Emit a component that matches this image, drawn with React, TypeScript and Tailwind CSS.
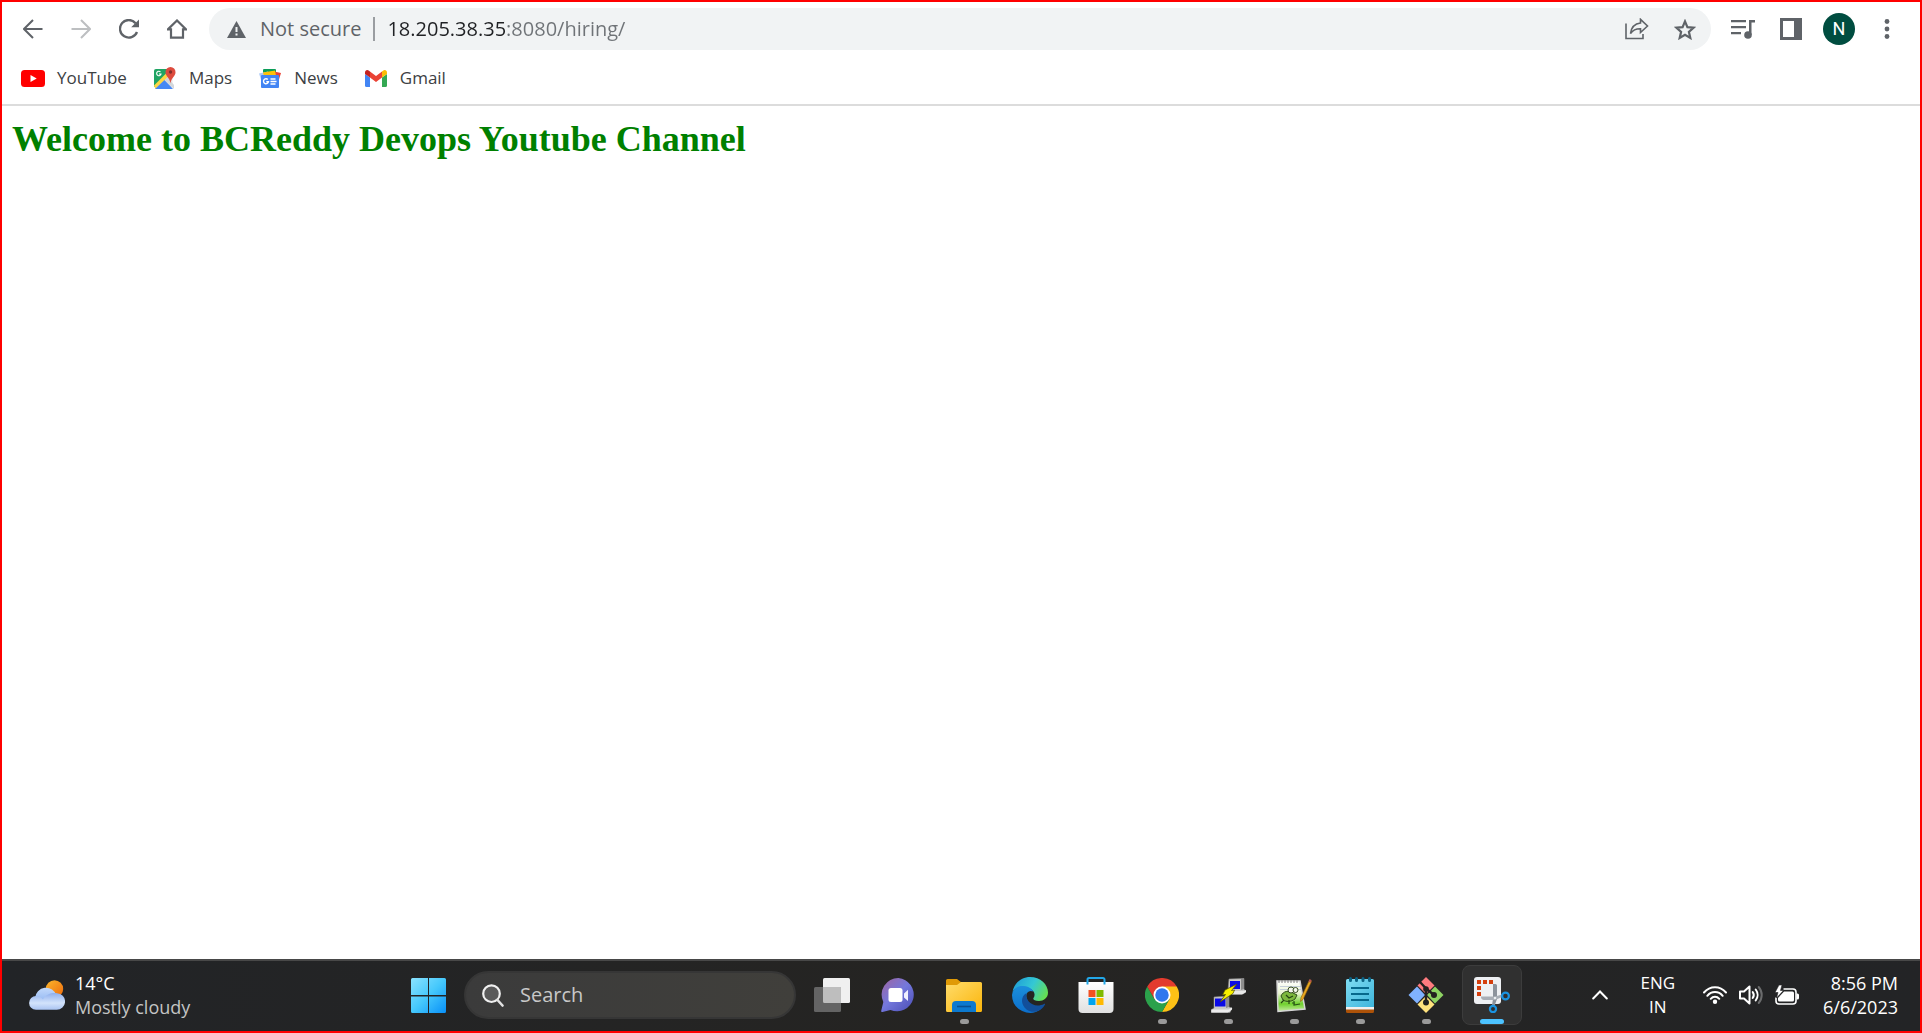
import type { ReactNode } from "react";

function IconButton({ label, children }: { label: string; children: ReactNode }) {
  return (
    <button type="button" aria-label={label} className="flex size-8 shrink-0 items-center justify-center text-[#5f6368]">
      {children}
    </button>
  );
}

/* ---------- Browser icons ---------- */

function ArrowIcon({ forward = false }: { forward?: boolean }) {
  return (
    <svg width="20" height="20" viewBox="0 0 20 20" fill="none" stroke={forward ? "#bdbfc1" : "#5f6368"} strokeWidth="2">
      {forward ? <path d="M0.5 10H18.5M10 1l9 9-9 9" /> : <path d="M19.5 10H1.5M10 1l-9 9 9 9" />}
    </svg>
  );
}

function ReloadIcon() {
  return (
    <svg width="20" height="20" viewBox="0 0 20 20">
      <path d="M18 13A8.8 8.8 0 1 1 16.6 4.2" fill="none" stroke="#5f6368" strokeWidth="2.3" />
      <path d="M20 0.5V8.3H12.2Z" fill="#5f6368" />
    </svg>
  );
}

function HomeIcon() {
  return (
    <svg width="20" height="20" viewBox="0 0 20 20" fill="none" stroke="#5f6368" strokeWidth="2.2">
      <path d="M0.9 10.4 10 1.5l9.1 8.9H16V18.7H4V10.4Z" strokeLinejoin="miter" />
    </svg>
  );
}

function WarningIcon() {
  return (
    <svg width="19" height="17" viewBox="0 0 19 17" className="shrink-0">
      <path d="M9.5 0 19 17H0Z" fill="#5f6368" />
      <path d="M8.5 6h2v5h-2zM8.5 12.5h2v2h-2z" fill="#f1f3f4" />
    </svg>
  );
}

function ShareIcon() {
  return (
    <svg width="24" height="22" viewBox="0 0 24 22" fill="none" stroke="#5f6368" strokeWidth="1.6">
      <path d="M1 5.5V20.5H18V16" />
      <path d="M15.5 1.3 22.5 8l-7 6.5V10.8C11 10.7 8 12 5.5 15.5 6.2 10 9.2 5.7 15.5 5Z" />
    </svg>
  );
}

function StarIcon() {
  return (
    <svg width="22" height="21" viewBox="0 0 22 21" fill="none" stroke="#5f6368" strokeWidth="2.2">
      <path d="m11 2.4 2.4 5.8 6.2.5-4.7 4.1 1.4 6.1L11 15.7l-5.3 3.2 1.4-6.1L2.4 8.7l6.2-.5Z" />
    </svg>
  );
}

function QueueIcon() {
  return (
    <svg width="24" height="19" viewBox="0 0 24 19">
      <path d="M0 1.2h15M0 7.2h15M0 13.2h10" stroke="#5f6368" strokeWidth="2.2" />
      <path d="M18 0h6v2.5h-3.500V15H18Z" fill="#5f6368" />
      <circle cx="17" cy="15" r="3.8" fill="#5f6368" />
    </svg>
  );
}

function SidePanelIcon() {
  return (
    <svg width="22" height="22" viewBox="0 0 22 22">
      <path d="M0 0h22v22H0ZM3 3v16h11V3Z" fill="#5f6368" fillRule="evenodd" />
    </svg>
  );
}

function MenuDotsIcon() {
  return (
    <svg width="6" height="20" viewBox="0 0 6 20" fill="#5f6368">
      <circle cx="3" cy="2.5" r="2.4" />
      <circle cx="3" cy="10" r="2.4" />
      <circle cx="3" cy="17.5" r="2.4" />
    </svg>
  );
}

function YouTubeIcon() {
  return (
    <svg width="24" height="17" viewBox="0 0 24 17">
      <rect width="24" height="17" rx="3.5" fill="#f00" />
      <path d="M9.5 5v7l6.2-3.5Z" fill="#fff" />
    </svg>
  );
}

function MapsIcon() {
  return (
    <svg width="24" height="24" viewBox="0 0 24 24">
      <path d="M3 3H19.5V21.5H3a2 2 0 0 1-2-2V5a2 2 0 0 1 2-2Z" fill="#e8eaed" />
      <path d="M3 3H16v6L1 21V5a2 2 0 0 1 2-2Z" fill="#1fa463" />
      <path d="m1 19.5 12-12 3 3L2.5 23Z" fill="#fdd744" />
      <path d="M2 23 11.500 14 20 23Z" fill="#4688f4" />
      <path d="m11.5 14 3-3L21 19v4Z" fill="#d4d7da" />
      <path d="M17.5 1a5 5 0 0 1 5 5.2c0 4-4 5-5 11-1-6-5-7-5-11a5 5 0 0 1 5-5.2Z" fill="#dd4b3e" />
      <circle cx="17.5" cy="6" r="1.7" fill="#822f2b" />
      <path d="M7.500 6A2.2 2.2 0 1 0 8 8H6" fill="none" stroke="#fff" strokeWidth="1.1" />
    </svg>
  );
}

function NewsIcon() {
  return (
    <svg width="24" height="20" viewBox="0 0 24 20">
      <rect x="5" y="1" width="13" height="12" rx="1" fill="#0c9d58" />
      <path d="m1 5.5 9-2 3 11-8 3Z" fill="#a9c9f8" />
      <path d="m23 5-9-2-3 11 8 4Z" fill="#ea4335" />
      <path d="m5 4.5 12-2 2 10H7Z" fill="#ffc107" />
      <rect x="3" y="7" width="18" height="13" rx="1" fill="#4285f4" />
      <path d="M9.800 11.500A2.5 2.5 0 1 0 10.500 13.700H8.300" fill="none" stroke="#fff" strokeWidth="1.4" />
      <path d="M12.500 11h5M12.500 13.500h6M12.500 16h5" stroke="#fff" strokeWidth="1.3" />
    </svg>
  );
}

function GmailIcon() {
  return (
    <svg width="22" height="17" viewBox="0 0 22 17">
      <path d="M0 4 5 7.500V17H1.500A1.500 1.500 0 0 1 0 15.500Z" fill="#4285f4" />
      <path d="M22 4 17 7.500V17h3.500a1.500 1.500 0 0 0 1.500-1.500Z" fill="#34a853" />
      <path d="M5 1.500 11 6l6-4.500v6L11 12 5 7.500Z" fill="#ea4335" />
      <path d="M0 2.500C0 .2 2.300-.6 4 .7l1 .8v6L0 4Z" fill="#c5221f" />
      <path d="M22 2.500C22 .2 19.700-.6 18 .7l-1 .8v6L22 4Z" fill="#fbbc04" />
    </svg>
  );
}

/* ---------- Taskbar icons ---------- */

function WeatherIcon() {
  return (
    <svg width="36" height="30" viewBox="0 0 36 30" className="shrink-0">
      <defs>
        <linearGradient id="sun" x1="0" y1="0" x2="1" y2="1">
          <stop offset="0" stopColor="#fbb62c" />
          <stop offset="1" stopColor="#ee6a0c" />
        </linearGradient>
        <linearGradient id="cloudBack" x1="0" y1="0" x2="0" y2="1">
          <stop offset="0" stopColor="#c2d9fb" />
          <stop offset="1" stopColor="#86aef0" />
        </linearGradient>
        <linearGradient id="cloudFront" x1="0" y1="0" x2="0" y2="1">
          <stop offset="0" stopColor="#8fb0ee" />
          <stop offset="0.6" stopColor="#d3e3fb" />
          <stop offset="1" stopColor="#a9c3f2" />
        </linearGradient>
      </defs>
      <circle cx="25.5" cy="9" r="8.7" fill="url(#sun)" />
      <path d="M6 18a11 11 0 0 1 21.500-2.500L26 26H8Z" fill="url(#cloudBack)" />
      <path d="M7 16c3 0 5 1 7 3.500C17 14 23 12.500 28 13.200a8.300 8.300 0 0 1-.5 16.600H7A6.900 6.900 0 0 1 7 16Z" fill="url(#cloudFront)" />
    </svg>
  );
}

function StartIcon() {
  return (
    <svg width="35" height="35" viewBox="0 0 35 35">
      <defs>
        <linearGradient id="start" x1="0" y1="0" x2="35" y2="35" gradientUnits="userSpaceOnUse">
          <stop offset="0" stopColor="#8be3ff" />
          <stop offset="0.5" stopColor="#45c8fc" />
          <stop offset="1" stopColor="#0890f8" />
        </linearGradient>
      </defs>
      <path d="M1.500 0H17V17H0V1.500A1.500 1.500 0 0 1 1.500 0ZM18 0h15.500A1.500 1.500 0 0 1 35 1.500V17H18ZM0 18.500h17V35H1.500A1.500 1.500 0 0 1 0 33.500ZM18 18.500h17v15a1.500 1.500 0 0 1-1.500 1.500H18Z" fill="url(#start)" />
    </svg>
  );
}

function SearchIcon() {
  return (
    <svg width="22" height="23" viewBox="0 0 22 23" className="shrink-0">
      <circle cx="9.5" cy="9.7" r="8.3" fill="#5a5a5a" stroke="#f0f0f0" strokeWidth="2.2" />
      <path d="m15.500 16 5 5.500" stroke="#e2e2e2" strokeWidth="2.6" strokeLinecap="round" />
    </svg>
  );
}

function TaskViewIcon() {
  return (
    <svg width="36" height="34" viewBox="0 0 36 34">
      <rect x="9" width="27" height="25" rx="1.5" fill="#f0f0f0" />
      <rect y="9" width="27" height="25" rx="1.5" fill="#646464" />
      <path d="M9 9h18v16H10.500A1.500 1.500 0 0 1 9 23.500Z" fill="#bebebe" />
    </svg>
  );
}

function ChatIcon() {
  return (
    <svg width="34" height="34" viewBox="0 0 34 34">
      <defs>
        <linearGradient id="chat" x1="0" y1="0" x2="0.9" y2="1">
          <stop offset="0" stopColor="#a0649f" />
          <stop offset="0.5" stopColor="#7478dc" />
          <stop offset="1" stopColor="#4d50b8" />
        </linearGradient>
      </defs>
      <path d="M17.500 0A16.700 16.700 0 1 1 9.500 32L1.500 34C.3 34.200 0 33.500.3 32.500L2.300 24A16.700 16.700 0 0 1 17.500 0Z" fill="url(#chat)" />
      <rect x="7.500" y="10" width="14" height="14" rx="2.500" fill="#fff" />
      <path d="M23 15.500 27 11.800V23L23 19.500Z" fill="#f1f1ff" />
    </svg>
  );
}

function FolderIcon() {
  return (
    <svg width="36" height="33" viewBox="0 0 36 33">
      <defs>
        <linearGradient id="folder" x1="0" y1="0" x2="1" y2="1">
          <stop offset="0" stopColor="#ffdc6b" />
          <stop offset="1" stopColor="#fbb50b" />
        </linearGradient>
      </defs>
      <path d="M1.500 0H11l4.500 3.500V8H0V1.500A1.500 1.500 0 0 1 1.500 0Z" fill="#e09a06" />
      <path d="M0 6h11l4-3h19.500A1.500 1.500 0 0 1 36 4.500V31.500A1.500 1.500 0 0 1 34.500 33h-33A1.500 1.500 0 0 1 0 31.500Z" fill="url(#folder)" />
      <path d="M6 33V26a4 4 0 0 1 4-4H26a4 4 0 0 1 4 4v7Z" fill="#0c79cf" />
      <path d="M11 27.500H25" stroke="#094f91" strokeWidth="1.6" />
    </svg>
  );
}

function EdgeIcon() {
  return (
    <svg width="36" height="36" viewBox="0 0 36 36">
      <defs>
        <linearGradient id="edgeTop" x1="0" y1="0.3" x2="1" y2="0.7">
          <stop offset="0" stopColor="#209fd8" />
          <stop offset="0.5" stopColor="#34c8d4" />
          <stop offset="1" stopColor="#68e04c" />
        </linearGradient>
        <linearGradient id="edgeLeft" x1="0" y1="0" x2="0" y2="1">
          <stop offset="0" stopColor="#1b8fdc" />
          <stop offset="1" stopColor="#0c6fcb" />
        </linearGradient>
      </defs>
      <path d="M0.500 15C2 5.500 10 0 18 0c10.500 0 18 7.500 18 15.500 0 5.500-4.500 8.500-9 8.500-4.500 0-6.500-1.500-5.500-3 2-3 1.500-7-4-9.500C11 8.500 3 10.500.5 15Z" fill="url(#edgeTop)" />
      <path d="M0 18C.5 12 5 9 10 9c5.500 0 9.500 2 11.500 5.500-6-2.500-9 3-6 9 1.500 3 3.500 5.500 7.500 7.500 3 1.500 4 1.500 6 1A18 18 0 0 1 0 18Z" fill="url(#edgeLeft)" />
      <path d="M14.500 16c-6 3.500-6 11.500 0 16.500 6.500 5 15.500 1.500 18.500-5 .3-.8-.2-1-1-.5-6 3-12.500 1-15.300-2.500-2.300-3-3.200-5.500-2.200-8.500Z" fill="#124f9b" />
    </svg>
  );
}

function StoreIcon() {
  return (
    <svg width="36" height="36" viewBox="0 0 36 36">
      <defs>
        <linearGradient id="store" x1="0" y1="0" x2="0" y2="1">
          <stop offset="0" stopColor="#fff" />
          <stop offset="1" stopColor="#e0e0e0" />
        </linearGradient>
      </defs>
      <path d="M0.500 5h35v27a4 4 0 0 1-4 4h-27a4 4 0 0 1-4-4Z" fill="url(#store)" />
      <path d="M9.500 7.500V2.500A1.500 1.500 0 0 1 11 1H25a1.500 1.500 0 0 1 1.500 1.500V7.500" fill="none" stroke="#22a7e8" strokeWidth="2" />
      <path d="M10.500 13h7v7h-7z" fill="#f25022" />
      <path d="M18.500 13h7v7h-7z" fill="#7fba00" />
      <path d="M10.500 21h7v7h-7z" fill="#00a4ef" />
      <path d="M18.500 21h7v7h-7z" fill="#ffb900" />
    </svg>
  );
}

function ChromeIcon() {
  return (
    <svg width="34" height="34" viewBox="0 0 48 48">
      <path d="M24 24 3.200 12A24 24 0 0 1 44.800 12Z" fill="#e33b2e" />
      <path d="M24 12H44.800A24 24 0 0 1 24 48L34.400 30Z" fill="#fdc116" />
      <path d="M13.600 30 3.200 12A24 24 0 0 0 24 48L34.400 30 24 24Z" fill="#2ba14b" />
      <path d="M3.200 12 13.600 30 24 12Z" fill="#e33b2e" />
      <circle cx="24" cy="24" r="12" fill="#fff" />
      <circle cx="24" cy="24" r="9.5" fill="#2f77ee" />
    </svg>
  );
}

function PuttyIcon() {
  return (
    <svg width="35" height="35" viewBox="0 0 35 35">
      <path d="M18 1 33 .5V11l2 3-3 2H18l-2-2 1-2Z" fill="#c9c9c9" stroke="#888" strokeWidth="0.6" />
      <path d="m30 1 3-.5V11l-3 1Z" fill="#8d8d8d" />
      <path d="M19 3h10v8H19Z" fill="#0a0ae6" />
      <path d="M16 13h16l3-1v2l-4 2.500H16Z" fill="#e8e8e8" />
      <path d="M3 19 18 18v11l3 1-2 4.500H0V32l3-2Z" fill="#c9c9c9" stroke="#888" strokeWidth="0.6" />
      <path d="m15 19 3-.5V29l-3 1Z" fill="#8d8d8d" />
      <path d="M4 20.500h10.500v8H4Z" fill="#0a0ae6" />
      <path d="M0.500 31.500h17l3.500-2v2l-4 3H.5Z" fill="#ececec" />
      <path d="M26 6 14 12l-2.500 5 3-.5L9 24l13-8.500 1.500-3.500-3 .5Z" fill="#f8f000" stroke="#4d4a00" strokeWidth="0.7" />
    </svg>
  );
}

function NotepadPlusIcon() {
  return (
    <svg width="36" height="36" viewBox="0 0 36 36">
      <defs>
        <linearGradient id="page" x1="0" y1="0" x2="0" y2="1">
          <stop offset="0" stopColor="#fff" />
          <stop offset="0.4" stopColor="#eaf4d2" />
          <stop offset="0.75" stopColor="#6fd02c" />
          <stop offset="1" stopColor="#c8eba5" />
        </linearGradient>
      </defs>
      <path d="M1 4 24 4l5 28L2 34.500Z" fill="url(#page)" stroke="#d5d5d5" strokeWidth="1.5" />
      <path d="M3 3v3M6 3v3M9 3v3M12 3v3M15 3v3M18 3v3M21 3v3" stroke="#7d7d7d" strokeWidth="1" />
      <path d="M4 9.500H25M4 12.500H25" stroke="#b9c4d6" strokeWidth="0.8" />
      <path d="M5 19c2-5 8-6 12-3l4 2-2 4c-4 3-9 3-12 1Z" fill="#7cb83c" stroke="#2c4d16" strokeWidth="1" />
      <circle cx="15" cy="13" r="3" fill="#f4f7ec" stroke="#374d20" strokeWidth="1" />
      <circle cx="19.5" cy="13" r="2.5" fill="#f4f7ec" stroke="#374d20" strokeWidth="1" />
      <path d="M8 23 5 26M13 23v4M10 18l3 3 4-2" stroke="#244410" strokeWidth="1.2" fill="none" />
      <path d="M18 24v4l6-1M16 26h3" stroke="#285516" strokeWidth="1.2" fill="none" />
      <path d="m33.500 3 2 1.500-8.500 18-2.500 2 .5-4Z" fill="#e8a91f" stroke="#8d5b10" strokeWidth="0.6" />
      <path d="m32.500 4.500 1.200-2.500 2 1.200-1.200 2.500Z" fill="#b95a4e" />
    </svg>
  );
}

function NotepadIcon() {
  return (
    <svg width="28" height="36" viewBox="0 0 28 36">
      <defs>
        <linearGradient id="notepad" x1="0" y1="0" x2="1" y2="1">
          <stop offset="0" stopColor="#7fdcf2" />
          <stop offset="1" stopColor="#3eb5dc" />
        </linearGradient>
      </defs>
      <path d="M0 30h28v4.500a1.500 1.500 0 0 1-1.500 1.500h-25A1.500 1.500 0 0 1 0 34.500Z" fill="#ad5208" />
      <path d="M0 28h28v4.500H0Z" fill="#f0f0f0" />
      <path d="M1.500 2h25A1.500 1.500 0 0 1 28 3.500V30H0V3.500A1.500 1.500 0 0 1 1.500 2Z" fill="url(#notepad)" />
      <path d="M5 11H23M5 17H23M5 23H23" stroke="#06688c" strokeWidth="1.8" />
      <path d="M4.500 1.500v2M10.500 1.500v2M17 1.500v2M23.500 1.500v2" stroke="#0b6486" strokeWidth="3" strokeLinecap="round" />
    </svg>
  );
}

function GitIcon() {
  return (
    <svg width="36" height="36" viewBox="0 0 36 36">
      <path d="M18 0 26.500 8.500 18 17 9.500 8.500Z" fill="#ff7b7e" />
      <path d="M9 9.500 17 18 9 26.500 0.500 18Z" fill="#80b2ff" />
      <path d="M27 9.500 35.500 18 27 26.500 19 18Z" fill="#8ed363" />
      <path d="M18 19 26.500 27.500 18 36 9.500 27.500Z" fill="#ffe27d" />
      <path d="M11.500 4.500 18 11.500V26M18 11.500l8 6.500" stroke="#242220" strokeWidth="2.4" fill="none" />
      <circle cx="18" cy="12" r="2.8" fill="#242220" />
      <circle cx="26" cy="18" r="3" fill="#242220" />
      <circle cx="18" cy="25.5" r="3" fill="#242220" />
    </svg>
  );
}

function SnippingIcon() {
  return (
    <svg width="36" height="36" viewBox="0 0 36 36">
      <rect width="27" height="27" rx="3" fill="#eef0f3" />
      <path d="M3 3h4v4H3zM9 3h4v4H9zM15 3h4v4h-4zM3 9h4v4H3zM3 15h4v4H3z" fill="#d53e0c" />
      <path d="M19 7h2.500A1.500 1.500 0 0 1 23 8.500V22l-2.500 7-2.500-1 1-6Z" fill="#8c939c" />
      <path d="M7 19.500h14l7-2 .8 2.300L21 23H10a3 3 0 0 1-3-3.500Z" fill="#a8aeb6" />
      <circle cx="21" cy="21" r="1.3" fill="#ebeef1" />
      <circle cx="31.5" cy="19" r="3.4" fill="none" stroke="#1a93e0" strokeWidth="2.2" />
      <circle cx="19" cy="32" r="3.1" fill="none" stroke="#1a93e0" strokeWidth="2.2" />
    </svg>
  );
}

function ChevronUpIcon() {
  return (
    <svg width="16" height="10" viewBox="0 0 16 10" fill="none" stroke="#fff" strokeWidth="2" strokeLinecap="round">
      <path d="m1.200 8.500 6.800-7 6.800 7" />
    </svg>
  );
}

function WifiIcon() {
  return (
    <svg width="24" height="18" viewBox="0 0 24 18" fill="none" stroke="#fff" strokeWidth="2" strokeLinecap="round">
      <path d="M1 6.500C7-.500 17-.500 23 6.500" />
      <path d="M4.300 9.800c4.200-5 11.200-5 15.400 0" />
      <path d="M7.700 12.800c2.400-2.800 6.200-2.800 8.600 0" />
      <circle cx="12" cy="15.8" r="1.2" fill="#fff" />
    </svg>
  );
}

function VolumeIcon() {
  return (
    <svg width="24" height="20" viewBox="0 0 24 20" fill="none" stroke="#fff" strokeWidth="2" strokeLinecap="round" strokeLinejoin="round">
      <path d="M1 6.500H5L10.500 1.500V18.500L5 13.500H1Z" />
      <path d="M13.700 7c1.300 1.800 1.300 4.200 0 6M16.700 4.500c2.500 3.200 2.500 7.800 0 11" />
      <path d="M19.700 2c4 4.700 4 11.300 0 16" stroke="#6b6c6d" />
    </svg>
  );
}

function BatteryIcon() {
  return (
    <svg width="24" height="20" viewBox="0 0 24 20">
      <path d="M8.500 4H18a3 3 0 0 1 3 3V16a3 3 0 0 1-3 3H4a3 3 0 0 1-3-3V12.500" fill="none" stroke="#fff" strokeWidth="1.6" />
      <path d="M9 6.500H17.500a1.500 1.500 0 0 1 1.500 1.500v7a1.500 1.500 0 0 1-1.500 1.500H4.500A1.500 1.500 0 0 1 3 15v-2Z" fill="#fff" />
      <path d="M21.500 8.500h1A1.500 1.500 0 0 1 24 10v3a1.500 1.500 0 0 1-1.500 1.500h-1Z" fill="#fff" />
      <path d="M4 0 0 7.500h3L1.500 13 8.500 5.500h-3L7 0Z" fill="#fff" stroke="#232425" strokeWidth="0.6" />
    </svg>
  );
}

/* ---------- Page ---------- */

const bookmarks = [
  { name: "YouTube", icon: <YouTubeIcon /> },
  { name: "Maps", icon: <MapsIcon /> },
  { name: "News", icon: <NewsIcon /> },
  { name: "Gmail", icon: <GmailIcon /> },
];

type AppState = "idle" | "running" | "active";

const apps: { name: string; icon: ReactNode; state: AppState }[] = [
  { name: "Task View", icon: <TaskViewIcon />, state: "idle" },
  { name: "Chat", icon: <ChatIcon />, state: "idle" },
  { name: "File Explorer", icon: <FolderIcon />, state: "running" },
  { name: "Microsoft Edge", icon: <EdgeIcon />, state: "idle" },
  { name: "Microsoft Store", icon: <StoreIcon />, state: "idle" },
  { name: "Google Chrome", icon: <ChromeIcon />, state: "running" },
  { name: "PuTTY", icon: <PuttyIcon />, state: "running" },
  { name: "Notepad++", icon: <NotepadPlusIcon />, state: "running" },
  { name: "Notepad", icon: <NotepadIcon />, state: "running" },
  { name: "Git", icon: <GitIcon />, state: "running" },
  { name: "Snipping Tool", icon: <SnippingIcon />, state: "active" },
];

function BrowserBar() {
  return (
    <header className="border-b-2 border-[#dcdcdc] pt-1.5 pb-2">
      <div className="flex items-center gap-4 pr-[17px] pl-[15px]">
        <nav aria-label="Navigation" className="flex gap-4">
          <IconButton label="Back"><ArrowIcon /></IconButton>
          <IconButton label="Forward"><ArrowIcon forward /></IconButton>
          <IconButton label="Reload"><ReloadIcon /></IconButton>
          <IconButton label="Home"><HomeIcon /></IconButton>
        </nav>
        <div className="flex h-[42px] min-w-0 flex-1 items-center rounded-full bg-[#f1f3f4] pr-2.5 pl-[18px] text-xl">
          <button type="button" className="flex shrink-0 items-center gap-[14px] text-[#5f6368]">
            <WarningIcon />
            Not secure
          </button>
          <span className="ml-3 h-6 w-0.5 shrink-0 bg-[#9a9da1]" />
          <input
            type="text"
            aria-label="Address"
            defaultValue="18.205.38.35:8080/hiring/"
            className="ml-3 min-w-0 flex-1 bg-[linear-gradient(to_right,#202124_120px,#6f7377_120px)] bg-clip-text text-transparent outline-none"
          />
          <div className="flex gap-4">
            <IconButton label="Share"><ShareIcon /></IconButton>
            <IconButton label="Bookmark this page"><StarIcon /></IconButton>
          </div>
        </div>
        <div className="flex gap-4">
          <IconButton label="Media queue"><QueueIcon /></IconButton>
          <IconButton label="Side panel"><SidePanelIcon /></IconButton>
          <button type="button" aria-label="Profile" className="flex size-8 items-center justify-center rounded-full bg-[#004d40] font-[Roboto] text-lg text-white">
            N
          </button>
          <IconButton label="Menu"><MenuDotsIcon /></IconButton>
        </div>
      </div>
      <nav aria-label="Bookmarks" className="mt-2.5 flex items-center gap-[26px] px-[19px] text-[17px] leading-9 text-[#3c4043]">
        {bookmarks.map((b) => (
          <a key={b.name} href="#" className="flex items-center gap-3">
            <span className="flex w-6 justify-center">{b.icon}</span>
            {b.name}
          </a>
        ))}
      </nav>
    </header>
  );
}

function TaskButton({ name, icon, state }: { name: string; icon: ReactNode; state: AppState }) {
  return (
    <button
      type="button"
      aria-label={name}
      className={
        state === "active"
          ? "relative flex size-[60px] items-center justify-center rounded-lg border border-[#3c3c3c] bg-[#303030]"
          : "relative flex size-[60px] items-center justify-center rounded-lg border border-transparent"
      }
    >
      {icon}
      {state === "running" && <span className="absolute bottom-0 h-[5px] w-[9px] rounded-full bg-[#9a9a9a]" />}
      {state === "active" && <span className="absolute bottom-0 h-[5px] w-6 rounded-full bg-[#4cc2ff]" />}
    </button>
  );
}

function Taskbar() {
  return (
    <footer className="grid h-[72px] grid-cols-[1fr_auto_1fr] items-center border-t-2 border-[#484848] bg-linear-to-r from-[#222427] via-[#252422] to-[#232426] pr-0.5 pb-0.5 text-lg leading-6 text-white">
      <button type="button" className="flex items-center gap-2.5 pl-[27px] text-left">
        <WeatherIcon />
        <span className="flex flex-col">
          <span>14°C</span>
          <span className="text-[#c4c4c4]">Mostly cloudy</span>
        </span>
      </button>
      <div className="flex items-center gap-1.5">
        <button type="button" aria-label="Start" className="flex size-[60px] items-center justify-center">
          <StartIcon />
        </button>
        <label className="flex h-12 w-[332px] items-center gap-4 rounded-full border-2 border-[#363636] bg-linear-to-r from-[#3b3b3b] to-[#403f3b] px-4">
          <SearchIcon />
          <input type="search" aria-label="Search" placeholder="Search" className="min-w-0 flex-1 bg-transparent text-xl outline-none placeholder:text-[#c8c8c8]" />
        </label>
        {apps.map((a) => (
          <TaskButton key={a.name} {...a} />
        ))}
      </div>
      <div className="flex items-center justify-end pr-5">
        <button type="button" aria-label="Show hidden icons" className="flex size-8 items-center justify-center">
          <ChevronUpIcon />
        </button>
        <button type="button" className="mx-6 flex flex-col items-center text-[17px]">
          <span>ENG</span>
          <span>IN</span>
        </button>
        <button type="button" aria-label="Network, volume and battery" className="mx-1 flex items-center gap-3">
          <WifiIcon />
          <VolumeIcon />
          <BatteryIcon />
        </button>
        <button type="button" className="ml-5 flex flex-col items-end">
          <span>8:56 PM</span>
          <span>6/6/2023</span>
        </button>
      </div>
    </footer>
  );
}

export default function App() {
  return (
    <div className="flex min-h-screen flex-col border-2 border-[#ff0000] bg-white font-['Open_Sans',sans-serif]">
      <BrowserBar />
      <main className="flex-1 px-2.5 py-[13px]">
        <h1 className="font-['Liberation_Serif',serif] text-4xl font-bold text-[#008000]">
          Welcome to BCReddy Devops Youtube Channel
        </h1>
      </main>
      <Taskbar />
    </div>
  );
}
